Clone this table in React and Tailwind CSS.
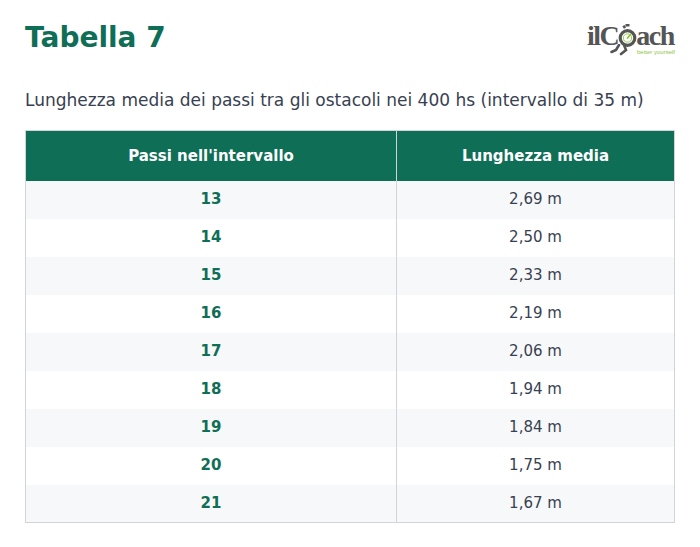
import React from 'react';

const rows = [
  ['13', '2,69 m'],
  ['14', '2,50 m'],
  ['15', '2,33 m'],
  ['16', '2,19 m'],
  ['17', '2,06 m'],
  ['18', '1,94 m'],
  ['19', '1,84 m'],
  ['20', '1,75 m'],
  ['21', '1,67 m'],
];

function Logo() {
  return (
    <div className="relative w-[88px] h-[35px] mt-[1px]">
      <div className="flex items-end h-[26px] leading-[22px] text-[#555555] font-bold text-[28px] tracking-[-1.5px] font-['Liberation_Serif',serif]">
        <span>ilC</span>
        <svg width="19" height="25" viewBox="0 0 19 25" className="-mb-[2px] -mr-[1px]">
          <rect x="7.5" y="0" width="4" height="2.5" fill="#555" />
          <rect x="5" y="1.5" width="2.5" height="3" fill="#555" transform="rotate(-30 6 3)" />
          <circle cx="9.5" cy="14" r="7.3" fill="none" stroke="#555" strokeWidth="3.2" />
          <circle cx="9.5" cy="14" r="4.2" fill="none" stroke="#8cc63f" strokeWidth="0.9" />
          <line x1="9.5" y1="14" x2="12.5" y2="10.5" stroke="#8cc63f" strokeWidth="1.8" strokeLinecap="round" />
        </svg>
        <span>ach</span>
      </div>
      <svg width="24" height="12" viewBox="0 0 24 12" className="absolute left-[23px] top-[23px]">
        <path d="M9 1 L6 6 L1.5 8" stroke="#555" strokeWidth="2.6" fill="none" strokeLinecap="round" />
        <path d="M14 1 L16 6 L11 10" stroke="#555" strokeWidth="2.6" fill="none" strokeLinecap="round" />
      </svg>
      <span className="absolute right-0 top-[28px] text-[6px] leading-none text-[#8cc63f] font-['Liberation_Sans',sans-serif]">
        better yourself
      </span>
    </div>
  );
}

export default function App() {
  return (
    <div className="w-[700px] h-[547px] bg-white px-[25px] pt-[20px] font-['DejaVu_Sans',sans-serif]">
      {/* Header */}
      <div className="flex items-start justify-between">
        <h1 className="text-[28px] font-bold text-[#0f6e56] leading-[36px]">Tabella 7</h1>
        <Logo />
      </div>

      <p className="mt-[32px] text-[17px] text-[#374151] leading-[24px]">
        Lunghezza media dei passi tra gli ostacoli nei 400 hs (intervallo di 35 m)
      </p>

      {/* Table */}
      <table className="mt-[18px] w-full border-collapse border border-[#d1d5db] text-[15px]">
        <thead>
          <tr className="bg-[#0f6e56] text-white h-[50px]">
            <th className="w-[371px] font-bold border-r border-[#d1d5db]">Passi nell'intervallo</th>
            <th className="font-bold">Lunghezza media</th>
          </tr>
        </thead>
        <tbody>
          {rows.map(([n, v], i) => (
            <tr key={n} className={i % 2 === 0 ? 'bg-[#f7f8fa] h-[38px]' : 'bg-white h-[38px]'}>
              <td className="text-center font-bold text-[#0f6e56] border-r border-[#d1d5db]">{n}</td>
              <td className="text-center text-[#374151]">{v}</td>
            </tr>
          ))}
        </tbody>
      </table>
    </div>
  );
}
